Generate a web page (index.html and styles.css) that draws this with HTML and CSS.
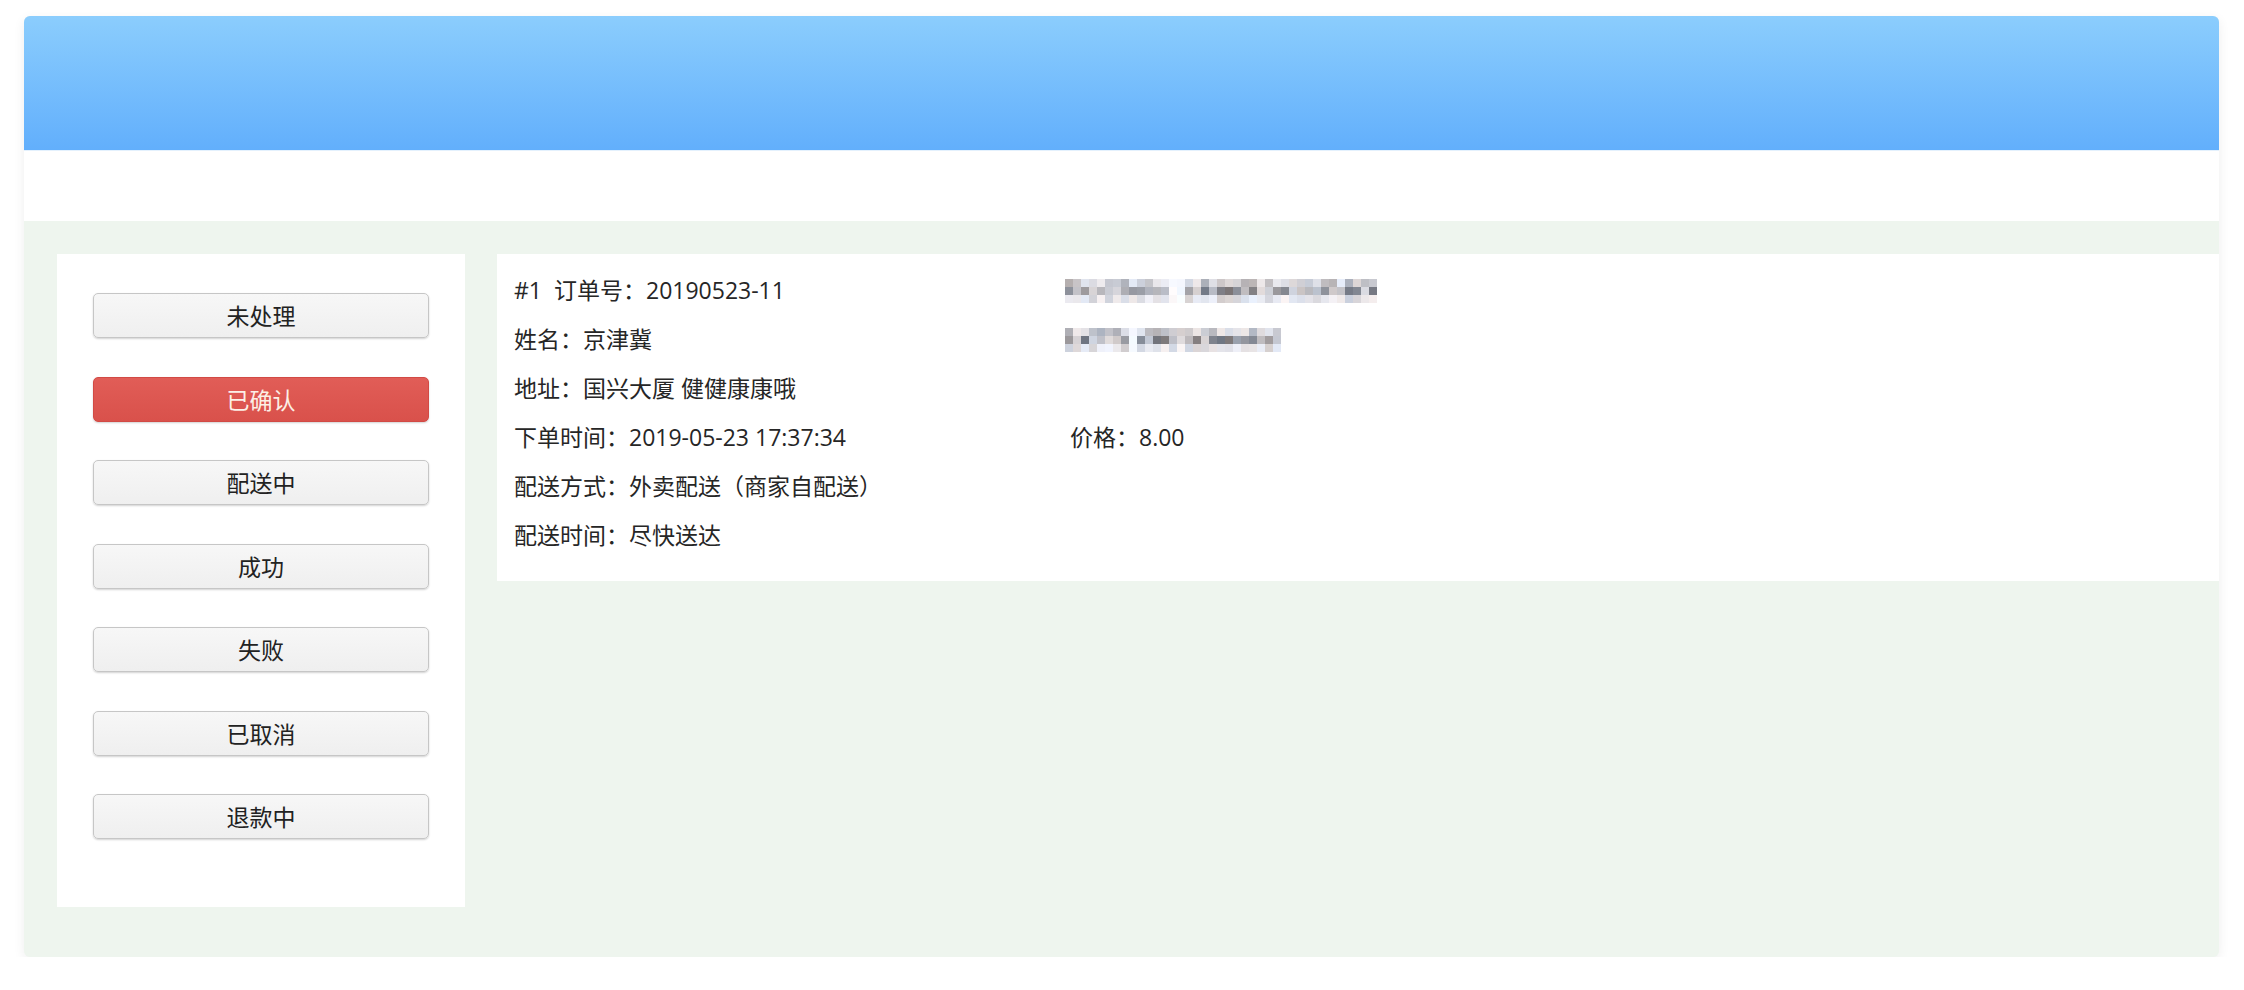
FILE: index.html
```html
<!DOCTYPE html>
<html lang="zh-CN">
<head>
<meta charset="utf-8">
<title>订单管理</title>
<link rel="stylesheet" href="styles.css">
</head>
<body>
<div class="page">
  <div class="card">
    <div class="hero"></div>
    <div class="subbar"></div>
    <div class="main">
      <aside class="side">
        <button class="btn">未处理</button>
        <button class="btn btn-active">已确认</button>
        <button class="btn">配送中</button>
        <button class="btn">成功</button>
        <button class="btn">失败</button>
        <button class="btn">已取消</button>
        <button class="btn">退款中</button>
      </aside>
      <section class="order">
        <div class="row">
          <div class="cell cell-first"><span class="num">#1</span>订单号：20190523-11</div>
          <div class="cell"><span class="mosaic" data-cols="39" data-gaps="13,14" data-seed="7"></span></div>
        </div>
        <div class="row">
          <div class="cell cell-first">姓名：京津冀</div>
          <div class="cell"><span class="mosaic" data-cols="27" data-gaps="8" data-seed="19"></span></div>
        </div>
        <div class="row">
          <div class="cell cell-first">地址：国兴大厦 健健康康哦</div>
        </div>
        <div class="row">
          <div class="cell cell-first">下单时间：2019-05-23 17:37:34</div>
          <div class="cell cell-price">价格：8.00</div>
        </div>
        <div class="row">
          <div class="cell cell-first">配送方式：外卖配送（商家自配送）</div>
        </div>
        <div class="row">
          <div class="cell cell-first">配送时间：尽快送达</div>
        </div>
      </section>
    </div>
  </div>
</div>
<script src="mosaic.js"></script>
</body>
</html>
```

FILE: styles.css
```css
body {
  margin: 0;
  background: #ffffff;
  font-family: "Open Sans", "Noto Sans CJK SC", "Microsoft YaHei", sans-serif;
}

.page {
  padding: 16px 25px 0 24px;
}

.card {
  width: 2195px;
  height: 941px;
  border-radius: 6px;
  overflow: hidden;
  background: #eef5ee;
  box-shadow: 0 3px 12px rgba(0, 0, 0, 0.07);
  display: flex;
  flex-direction: column;
}

.hero {
  flex: none;
  height: 134px;
  background: linear-gradient(#8bcdfd, #62affc);
}

.subbar {
  flex: none;
  height: 70px;
  background: #ffffff;
  border-top: 1px solid #e4f1fd;
}

.main {
  display: flex;
  align-items: flex-start;
  gap: 32px;
  padding: 33px 0 0 33px;
}

.side {
  flex: none;
  width: 408px;
  box-sizing: border-box;
  background: #ffffff;
  display: flex;
  flex-direction: column;
  gap: 38.5px;
  padding: 39px 36px 68px;
}

.btn {
  height: 45px;
  border: 1px solid #c6c6c6;
  border-radius: 5px;
  background: linear-gradient(#f7f7f7, #efefef);
  box-shadow: 0 1px 2px rgba(0, 0, 0, 0.18);
  font-family: "Noto Sans CJK SC", "Microsoft YaHei", sans-serif;
  font-size: 23px;
  color: #222;
  padding: 0;
  line-height: 43px;
  text-align: center;
}

.btn-active {
  background: linear-gradient(#e15d57, #d9514b);
  border-color: #d24a45;
  color: #fcefe6;
}

.order {
  flex: 1;
  background: #ffffff;
  padding: 12px 0 21px 17px;
  font-size: 23px;
  line-height: 49px;
  color: #262626;
}

.row {
  display: flex;
  height: 49px;
  align-items: center;
}

.cell-first {
  width: 551px;
  flex: none;
}

.cell-price {
  padding-left: 5px;
}

.num {
  margin-right: 12px;
}

.mosaic {
  display: block;
  height: 24px;
}

.mosaic svg {
  display: block;
}
```

FILE: mosaic.js
```js
(function () {
  var blocks = document.querySelectorAll('.mosaic');
  var NS = 'http://www.w3.org/2000/svg';
  blocks.forEach(function (el) {
    var cols = parseInt(el.getAttribute('data-cols'), 10);
    var gaps = (el.getAttribute('data-gaps') || '').split(',').map(Number);
    var seed = parseInt(el.getAttribute('data-seed'), 10) || 1;
    function rnd() {
      seed = (seed * 16807) % 2147483647;
      return seed / 2147483647;
    }
    var size = 8;
    var svg = document.createElementNS(NS, 'svg');
    svg.setAttribute('width', cols * size);
    svg.setAttribute('height', 3 * size);
    for (var c = 0; c < cols; c++) {
      var isGap = gaps.indexOf(c) !== -1;
      for (var r = 0; r < 3; r++) {
        var g;
        if (isGap) {
          g = 246 + rnd() * 8;
        } else if (r === 1) {
          g = 115 + rnd() * 105;
        } else if (r === 0) {
          g = 175 + rnd() * 65;
        } else {
          g = 205 + rnd() * 40;
        }
        var tint = (rnd() - 0.5) * 14;
        var red = Math.round(Math.min(255, g + tint));
        var green = Math.round(Math.min(255, g));
        var blue = Math.round(Math.min(255, g - tint + 6));
        var rect = document.createElementNS(NS, 'rect');
        rect.setAttribute('x', c * size);
        rect.setAttribute('y', r * size);
        rect.setAttribute('width', size);
        rect.setAttribute('height', size);
        rect.setAttribute('fill', 'rgb(' + red + ',' + green + ',' + blue + ')');
        svg.appendChild(rect);
      }
    }
    el.appendChild(svg);
  });
})();
```
